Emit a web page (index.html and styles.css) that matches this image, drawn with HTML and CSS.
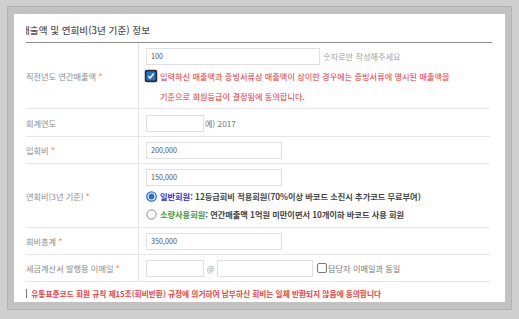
FILE: index.html
```html
<!DOCTYPE html>
<html lang="ko">
<head>
    <meta charset="UTF-8">
    <title>매출액 및 연회비 정보</title>
    <link rel="stylesheet" href="styles.css">
</head>
<body>
    <div class="frame">
        <div class="panel">
            <div class="content">
                <h3 class="title">매출액 및 연회비(3년 기준) 정보</h3>
                <table class="form">
                    <tr class="row-sales">
                        <th>직전년도 연간매출액 <span class="req">*</span></th>
                        <td>
                            <div class="line">
                                <span class="input w-wide">100</span>
                                <span class="hint">숫자로만 작성해주세요</span>
                            </div>
                            <div class="agree">
                                <span class="check-big">
                                    <svg width="14" height="14" viewBox="0 0 14 14">
                                        <rect x="0.75" y="0.75" width="12.5" height="12.5" rx="2" fill="#2d2d2d"/>
                                        <rect x="2.5" y="2.5" width="9" height="9" rx="1" fill="#1f74e0"/>
                                        <path d="M4.2 7.2 L6.1 9 L9.8 4.6" fill="none" stroke="#fff" stroke-width="1.5"/>
                                    </svg>
                                </span>입력하신 매출액과 증빙서류상 매출액이 상이한 경우에는 증빙서류에 명시된 매출액을<br>기준으로 회원등급이 결정됨에 동의합니다.
                            </div>
                        </td>
                    </tr>
                    <tr class="row-year">
                        <th>회계연도</th>
                        <td>
                            <div class="line">
                                <span class="input w-small"></span>
                                <span class="note">예) 2017</span>
                            </div>
                        </td>
                    </tr>
                    <tr>
                        <th>입회비 <span class="req">*</span></th>
                        <td><div class="line"><span class="input w-mid">200,000</span></div></td>
                    </tr>
                    <tr class="row-fee">
                        <th>연회비(3년 기준) <span class="req">*</span></th>
                        <td>
                            <div class="line"><span class="input w-mid">150,000</span></div>
                            <div class="radio-line">
                                <span class="radio">
                                    <svg width="11" height="11" viewBox="0 0 11 11">
                                        <circle cx="5.5" cy="5.5" r="4.7" fill="#fff" stroke="#1f6fe0" stroke-width="1.3"/>
                                        <circle cx="5.5" cy="5.5" r="2.9" fill="#1f6fe0"/>
                                    </svg>
                                </span><span class="grade-normal">일반회원</span>: 12등급회비 적용회원(70%이상 바코드 소진시 추가코드 무료부여)
                            </div>
                            <div class="radio-line">
                                <span class="radio">
                                    <svg width="11" height="11" viewBox="0 0 11 11">
                                        <circle cx="5.5" cy="5.5" r="4.6" fill="#fff" stroke="#8a8a8a" stroke-width="1"/>
                                    </svg>
                                </span><span class="grade-small">소량사용회원</span>: 연간매출액 1억원 미만이면서 10개이하 바코드 사용 회원
                            </div>
                        </td>
                    </tr>
                    <tr>
                        <th>회비총계 <span class="req">*</span></th>
                        <td><div class="line"><span class="input w-mid">350,000</span></div></td>
                    </tr>
                    <tr>
                        <th>세금계산서 발행용 이메일 <span class="req">*</span></th>
                        <td>
                            <div class="line">
                                <span class="input w-small"></span>
                                <span class="at">@</span>
                                <span class="input w-domain"></span>
                                <span class="check-small"></span>
                                <span class="note">담당자 이메일과 동일</span>
                            </div>
                        </td>
                    </tr>
                    <tr class="row-refund">
                        <td colspan="2">
                            <span class="check-cut"></span>
                            <span class="refund">유통표준코드 회원 규칙 제15조(회비반환) 규정에 의거하여 납부하신 회비는 일체 반환되지 않음에 동의합니다</span>
                        </td>
                    </tr>
                </table>
            </div>
        </div>
    </div>
</body>
</html>
```
FILE: styles.css
```css
body {
    margin: 0;
    background-color: #cfcfcf;
    font-family: "Noto Sans CJK KR", "Noto Sans", sans-serif;
    font-size: 8.2px;
    color: #555;
}
.frame {
    width: 491px;
    height: 290px;
    margin: 6px 0 0 7px;
    padding: 7px 6px 5px 6px;
    background-color: #c2c2c2;
    border: 1px solid #b2b2b2;
}
.panel {
    background-color: #fff;
    height: 288px;
    padding: 0 13px 0 12px;
    overflow: hidden;
}
.content {
    overflow: hidden;
    height: 288px;
}
.title {
    margin: 0 0 0 -5px;
    padding: 9px 0 5px 0;
    line-height: 14px;
    font-size: 9.6px;
    font-weight: 500;
    color: #555;
    border-bottom: 1px solid #8c8c8c;
    margin-right: 0;
}
.form {
    width: 464px;
    border-collapse: collapse;
}
.form th {
    width: 112px;
    padding: 0;
    text-align: left;
    font-weight: normal;
    color: #8a8a8a;
    border-right: 1px solid #e6e6e6;
    border-bottom: 1px solid #e6e6e6;
    white-space: nowrap;
}
.form td {
    padding: 4px 0 4px 7px;
    border-bottom: 1px solid #e6e6e6;
    vertical-align: top;
}
.req {
    color: #f2844a;
}
.line {
    display: flex;
    align-items: center;
    height: 18px;
}
.input {
    box-sizing: border-box;
    height: 17px;
    padding: 0 4px;
    border: 1px solid #e0e0e0;
    font-size: 7.2px;
    line-height: 15px;
    color: #555;
}
.w-wide { width: 174px; }
.w-mid { width: 136px; }
.w-small { width: 58px; }
.w-domain { width: 96px; }
.hint {
    margin-left: 3px;
    color: #a0a0a0;
}
.note {
    color: #777;
}
.row-year .note {
    margin-left: 1px;
}
.at {
    width: 13px;
    text-align: center;
    color: #999;
}
.row-sales td {
    padding-bottom: 2px;
}
.agree {
    margin-top: 1px;
    line-height: 20px;
    color: #ec3030;
    padding-left: 14px;
    white-space: nowrap;
}
.check-big {
    display: inline-block;
    width: 14px;
    margin-left: -16px;
    margin-right: 2px;
    vertical-align: -3px;
    line-height: 0;
}
.row-year td {
    padding-top: 5px;
}
.row-fee td {
    padding-bottom: 4px;
}
.radio-line {
    line-height: 18px;
    font-weight: bold;
    color: #444;
    white-space: nowrap;
}
.row-fee .line {
    margin-bottom: 1px;
}
.radio {
    display: inline-block;
    width: 11px;
    margin-right: 3px;
    vertical-align: -2px;
    line-height: 0;
}
.grade-normal {
    color: #2430e8;
}
.grade-small {
    color: #3b9a32;
}
.check-small {
    box-sizing: border-box;
    width: 10px;
    height: 10px;
    margin-left: 4px;
    margin-right: 1px;
    border: 1px solid #777;
    border-radius: 2px;
}
.row-refund td {
    padding: 4px 0 0 0;
    border-bottom: none;
    line-height: 14px;
    white-space: nowrap;
}
.check-cut {
    display: inline-block;
    box-sizing: border-box;
    width: 9px;
    height: 9px;
    margin-left: -8px;
    border: 1px solid #777;
    vertical-align: -1px;
}
.refund {
    margin-left: 2px;
    font-size: 7.7px;
    font-weight: bold;
    color: #f04040;
}
```
